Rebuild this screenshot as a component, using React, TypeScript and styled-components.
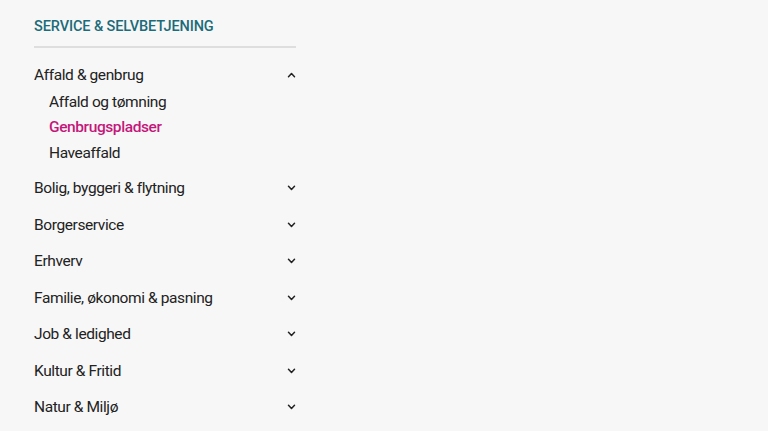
import { useState } from 'react';
import styled, { createGlobalStyle } from 'styled-components';

const GlobalStyle = createGlobalStyle`
  html, body {
    margin: 0;
    padding: 0;
    background: #f7f7f7;
  }
  body {
    font-family: Roboto, 'Liberation Sans', sans-serif;
    color: #222222;
  }
`;

type Section = {
  title: string;
  links?: string[];
  active?: string;
};

const sections: Section[] = [
  {
    title: 'Affald & genbrug',
    links: ['Affald og tømning', 'Genbrugspladser', 'Haveaffald'],
    active: 'Genbrugspladser',
  },
  { title: 'Bolig, byggeri & flytning' },
  { title: 'Borgerservice' },
  { title: 'Erhverv' },
  { title: 'Familie, økonomi & pasning' },
  { title: 'Job & ledighed' },
  { title: 'Kultur & Fritid' },
  { title: 'Natur & Miljø' },
];

function Chevron({ up }: { up?: boolean }) {
  return (
    <svg width="9" height="6" viewBox="0 0 9 6" fill="none">
      <path
        d={up ? 'M1.5 4.8 L4.5 1.6 L7.5 4.8' : 'M1.5 1.2 L4.5 4.4 L7.5 1.2'}
        stroke="#222"
        strokeWidth="1.5"
        strokeLinecap="round"
        strokeLinejoin="round"
      />
    </svg>
  );
}

export default function App() {
  const [open, setOpen] = useState<string>('Affald & genbrug');

  return (
    <Page>
      <GlobalStyle />
      <Nav>
        <Heading>SERVICE &amp; SELVBETJENING</Heading>
        <Divider />
        <List>
          {sections.map((section) => {
            const isOpen = open === section.title;
            return (
              <Group key={section.title}>
                <Toggle onClick={() => setOpen(isOpen ? '' : section.title)}>
                  <span>{section.title}</span>
                  <Chevron up={isOpen} />
                </Toggle>
                {isOpen && section.links && (
                  <SubList>
                    {section.links.map((link) => (
                      <SubLink key={link} $active={link === section.active}>
                        {link}
                      </SubLink>
                    ))}
                  </SubList>
                )}
              </Group>
            );
          })}
        </List>
      </Nav>
    </Page>
  );
}

const Page = styled.div`
  padding: 18px 0 0 34px;
`;

const Nav = styled.nav`
  width: 262px;
  display: flex;
  flex-direction: column;
`;

const Heading = styled.h2`
  margin: 0;
  font-size: 14.5px;
  line-height: 18px;
  font-weight: 500;
  color: #1b6b79;
  letter-spacing: -0.1px;
`;

const Divider = styled.div`
  height: 2px;
  background: #dedede;
  margin-top: 10px;
`;

const List = styled.div`
  display: flex;
  flex-direction: column;
  padding-top: 9px;
`;

const Group = styled.div`
  display: flex;
  flex-direction: column;
`;

const Toggle = styled.button`
  display: flex;
  align-items: center;
  justify-content: space-between;
  height: 36.5px;
  padding: 0;
  border: 0;
  background: none;
  font: inherit;
  font-size: 15.5px;
  letter-spacing: -0.4px;
  color: #222;
  text-align: left;
  cursor: pointer;
`;

const SubList = styled.div`
  display: flex;
  flex-direction: column;
  margin-top: -4px;
  padding: 0 0 4px 15px;
`;

const SubLink = styled.a<{ $active?: boolean }>`
  font-size: 15.5px;
  line-height: 25.5px;
  letter-spacing: -0.4px;
  color: ${({ $active }) => ($active ? '#c4177b' : '#222')};
  font-weight: ${({ $active }) => ($active ? 500 : 400)};
  text-decoration: none;
  cursor: pointer;
`;
